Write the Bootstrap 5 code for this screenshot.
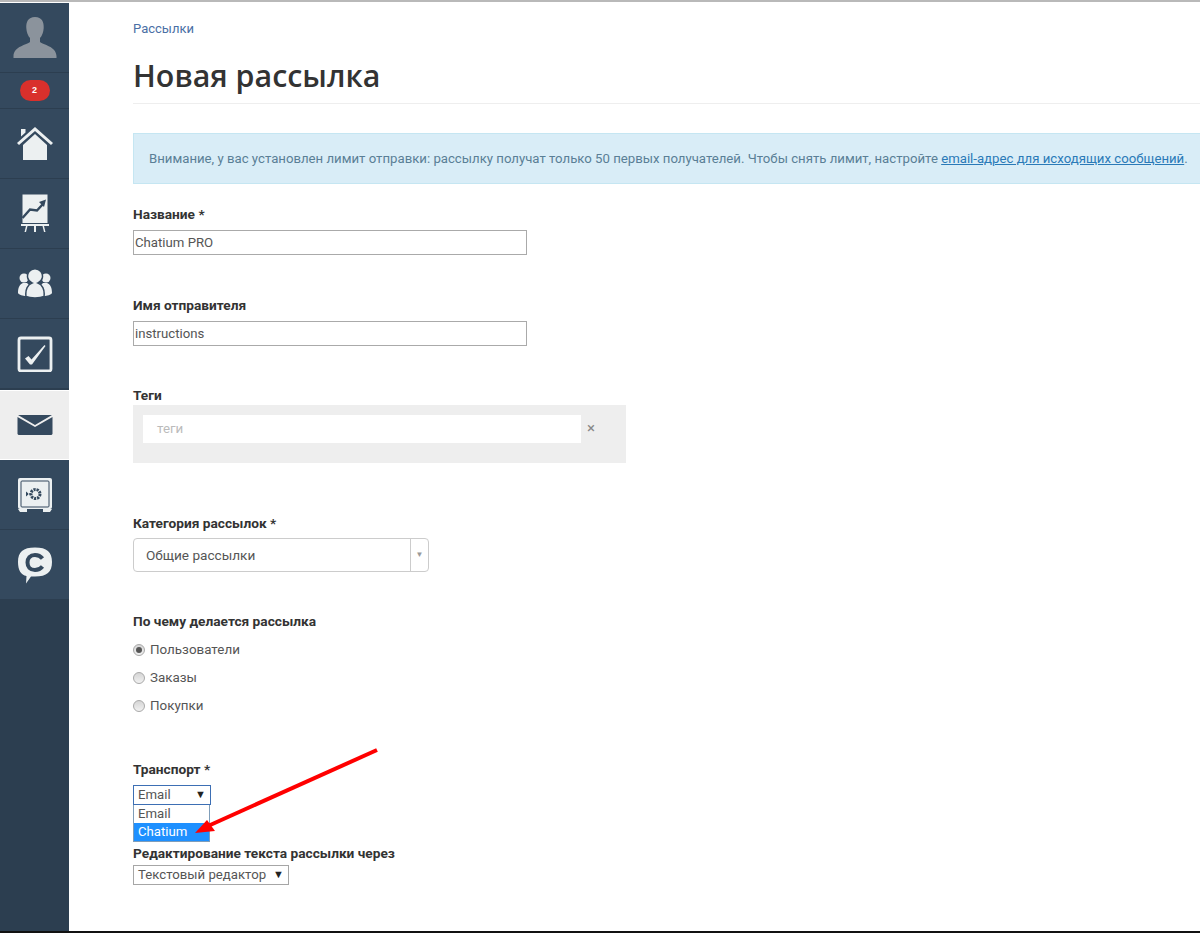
<!DOCTYPE html>
<html lang="ru">
<head>
<meta charset="utf-8">
<title>Новая рассылка</title>
<link href="https://cdn.jsdelivr.net/npm/bootstrap@5.3.0/dist/css/bootstrap.min.css" rel="stylesheet">
<style>
html,body{height:933px;overflow:hidden}
body{font-family:Roboto,"Liberation Sans",sans-serif;font-size:13.3px;color:#555;background:#fff}
.shot{height:933px;border-top:2px solid #b9b9b9;border-bottom:2px solid #111;padding-top:1px}
.rail{width:69px;background:#2c3e50;flex:none}
.rail-item{height:70px;background:#34495e;border-bottom:1px solid #2c3e50;display:flex;align-items:center;justify-content:center}
.rail-badge{height:36px}
.rail-active{background:#eee;height:70px;border-top:1px solid #fff;border-bottom:1px solid #fff;margin-top:1px}
.pill{width:30px;height:21px;border-radius:11px;background:#d9302c;color:#fff;font:700 9px/21px "Liberation Sans",sans-serif;text-align:center}
.content{padding-left:64px;width:1131px;flex:none}
.crumb{color:#4a6fa5;font-size:13px;line-height:18px;margin-top:17px}
.ttl{font-family:"Open Sans",sans-serif;font-size:30.4px;line-height:40px;font-weight:600;color:#333;margin:18px 0 0;padding-bottom:7px;border-bottom:1px solid #eee;width:1100px}
.note{width:1100px;height:51px;margin-top:29px;background:#d9edf7;border:1px solid #c5e6f2;padding:15px 15px;font-size:13.2px;line-height:19px;color:#5a7f96;white-space:nowrap;border-radius:0}
.note a{color:#2a7ab8}
.lbl{display:block;font-weight:700;font-size:13.7px;line-height:18px;color:#333;margin:0}
.txt{display:block;width:394px;height:25px;border:1px solid #aaa;padding:0 1px;font-size:13.2px;line-height:23px;color:#555;margin-top:7px}
.tagbox{width:493px;height:58px;background:#eee;margin-top:1px;padding:10px;display:flex;align-items:flex-start}
.tagfield{width:438px;height:28px;background:#fff;color:#bbb;padding-left:14px;font-size:13.3px;line-height:27px}
.tagx{color:#888;margin-left:6px;font-size:15px;line-height:26px}
.combo{width:296px;height:34px;border:1px solid #ccc;border-radius:4px;margin-top:6px;display:flex;font-size:13.6px;line-height:32px;color:#555}
.combo-val{flex:1;padding-left:12px}
.combo-arrow{width:18px;border-left:1px solid #ccc;display:flex;align-items:center;justify-content:center;color:#999;font-size:8px}
.rad{display:flex;align-items:center;height:28px;font-size:13.4px;color:#555}
.rad-first{margin-top:6px}
.rad-dot{width:12px;height:12px;border-radius:50%;background:linear-gradient(#d5d5d5,#f1f1f1);border:1px solid #a9a9a9;margin-right:5px;display:flex;align-items:center;justify-content:center}
.rad-dot i{display:block;width:6px;height:6px;border-radius:50%;background:#555}
.sel{display:flex;justify-content:space-between;align-items:center;border:1px solid #a6a6a6;height:20px;padding:0 4px;font-size:13.2px;line-height:18px;color:#555;background:#fff;white-space:nowrap}
.sel-arr{font-size:11px;color:#222}
.sel-open{width:78px;border:1px solid #3d6fb4;margin-top:7px}
.sel-plain{width:156px;margin-top:3px}
.droplist{width:77px;border:1px solid #7f9db9;border-top:0;background:#fff;font-size:13.2px;line-height:18px}
.droplist div{padding:0 4px}
.droplist .on{background:#1e90ff;color:#fff}
.arrowlay{position:absolute;left:0;top:-2px;pointer-events:none}
.mt-b1{margin-top:21px}.mt-b2{margin-top:41px}.mt-b3{margin-top:40px}.mt-b4{margin-top:51px}.mt-b5{margin-top:40px}.mt-b6{margin-top:40px}.mt-b7{margin-top:2px}
</style>
</head>
<body>
<div class="shot d-flex position-relative">
  <nav class="rail">
    <div class="rail-item"><svg width="46" height="46" viewBox="0 0 46 46"><path d="M23 2c-7 0-9 5-8.700 11 .2 4 1.700 8 3.700 10v4c-3 3-16 4-16.500 14v2h43v-2c-.5-10-13.500-11-16.500-14v-4c2-2 3.500-6 3.700-10C32 7 30 2 23 2z" fill="#8b939c"/></svg></div>
    <div class="rail-item rail-badge"><span class="pill">2</span></div>
    <div class="rail-item"><svg width="38" height="36" viewBox="0 0 38 36"><path d="M7 19L19 8l12 11v15H7z" fill="#ecf0f1"/><path d="M1 17L19 1l18 16-2 2L19 5 3 19z" fill="#ecf0f1"/><path d="M5 3h4.500v3.500L5 10.500z" fill="#ecf0f1"/></svg></div>
    <div class="rail-item"><svg width="36" height="42" viewBox="0 0 36 42"><path d="M5.500 1.500h25V30h-25z" fill="#ecf0f1"/><path d="M4 31h28v2H4zM9 33l-1.500 6H9l1.500-6zM17 33h2v6h-2zM25.500 33l1.500 6h1.500L27 33z" fill="#ecf0f1"/><path d="M5.500 25L13 16.500l7 1L26 11" fill="none" stroke="#34495e" stroke-width="2.400"/><path d="M29 6.500l-7 2.500 5 5z" fill="#34495e"/></svg></div>
    <div class="rail-item"><svg width="36" height="32" viewBox="0 0 36 32"><g fill="#ecf0f1"><circle cx="7" cy="10" r="4.500"/><circle cx="29" cy="10" r="4.500"/><path d="M1 25c0-6 2-9 5-10h4l3 3-4 10c-3 0-7-1-8-3zM35 25c0-6-2-9-5-10h-4l-3 3 4 10c3 0 7-1 8-3z"/><path d="M9 28.500c-1-7 2-12 6-13.500a7.500 7.500 0 1 1 6 0c4 1.500 7 6.500 6 13.500-4 2-14 2-18 0z" stroke="#34495e" stroke-width="1.500"/></g></svg></div>
    <div class="rail-item"><svg width="36" height="36" viewBox="0 0 36 36"><rect x="2" y="2" width="32" height="33" rx="2" fill="none" stroke="#ecf0f1" stroke-width="2.800"/><path d="M8 22.500l3.500-2.500 3 3.500L27.500 9l1 1L15 28.500h-2z" fill="#ecf0f1"/></svg></div>
    <div class="rail-item rail-active"><svg width="36" height="22" viewBox="0 0 36 22"><path d="M1 1h34L18 11zM.5 3l17.500 10L35.500 3v17l-1 1H1.500l-1-1z" fill="#34495e"/></svg></div>
    <div class="rail-item"><svg width="36" height="36" viewBox="0 0 36 36"><rect x="1" y="1" width="34" height="31" rx="2" fill="#ecf0f1"/><rect x="4" y="4" width="28" height="26" rx="1" fill="#ecf0f1" stroke="#34495e" stroke-width="1"/><path d="M1 32h9v3H3zM26 32h9l-2 3h-7z" fill="#ecf0f1"/><circle cx="18.500" cy="17" r="4.500" fill="none" stroke="#34495e" stroke-width="3" stroke-dasharray="2.200 .9"/><path d="M9 14.500v5l3-2.500zM11 16.500h3v1h-3z" fill="#34495e"/></svg></div>
    <div class="rail-item"><svg width="36" height="40" viewBox="0 0 36 40"><path d="M18 2.500C30 2.500 35 7 35 17S30 31.500 18 31.500h-4L9 38.500l.5-7.500C4 30 1 25 1 17 1 7 6 2.500 18 2.500z" fill="#ecf0f1"/><path d="M25.500 13.500C23.500 11 21 10 18 10c-5 0-7.500 3-7.500 7.500S13 25 18 25c3 0 5.500-1 7.500-3.500" fill="none" stroke="#34495e" stroke-width="4"/></svg></div>
  </nav>
  <main class="content">
    <div class="crumb">Рассылки</div>
    <h1 class="ttl">Новая рассылка</h1>
    <div class="note">Внимание, у вас установлен лимит отправки: рассылку получат только 50 первых получателей. Чтобы снять лимит, настройте <a href="#">email-адрес для исходящих сообщений</a>.</div>
    <label class="lbl mt-b1">Название *</label>
    <div class="txt">Chatium PRO</div>
    <label class="lbl mt-b2">Имя отправителя</label>
    <div class="txt">instructions</div>
    <label class="lbl mt-b3">Теги</label>
    <div class="tagbox"><div class="tagfield">теги</div><span class="tagx">×</span></div>
    <label class="lbl mt-b4">Категория рассылок *</label>
    <div class="combo"><div class="combo-val">Общие рассылки</div><div class="combo-arrow">▼</div></div>
    <label class="lbl mt-b5">По чему делается рассылка</label>
    <div class="rad rad-first"><span class="rad-dot"><i></i></span>Пользователи</div>
    <div class="rad"><span class="rad-dot"></span>Заказы</div>
    <div class="rad"><span class="rad-dot"></span>Покупки</div>
    <label class="lbl mt-b6">Транспорт *</label>
    <div class="sel sel-open">Email<span class="sel-arr">▼</span></div>
    <div class="droplist"><div>Email</div><div class="on">Chatium</div></div>
    <label class="lbl mt-b7">Редактирование текста рассылки через</label>
    <div class="sel sel-plain">Текстовый редактор<span class="sel-arr">▼</span></div>
  </main>
  <svg class="arrowlay" width="1200" height="933" viewBox="0 0 1200 933"><path d="M377 750L208 826" stroke="#f00" stroke-width="4" fill="none"/><path d="M195 833l12-13 8 11z" fill="#f00"/></svg>
</div>
<script src="https://cdn.jsdelivr.net/npm/bootstrap@5.3.0/dist/js/bootstrap.bundle.min.js"></script>
</body>
</html>
